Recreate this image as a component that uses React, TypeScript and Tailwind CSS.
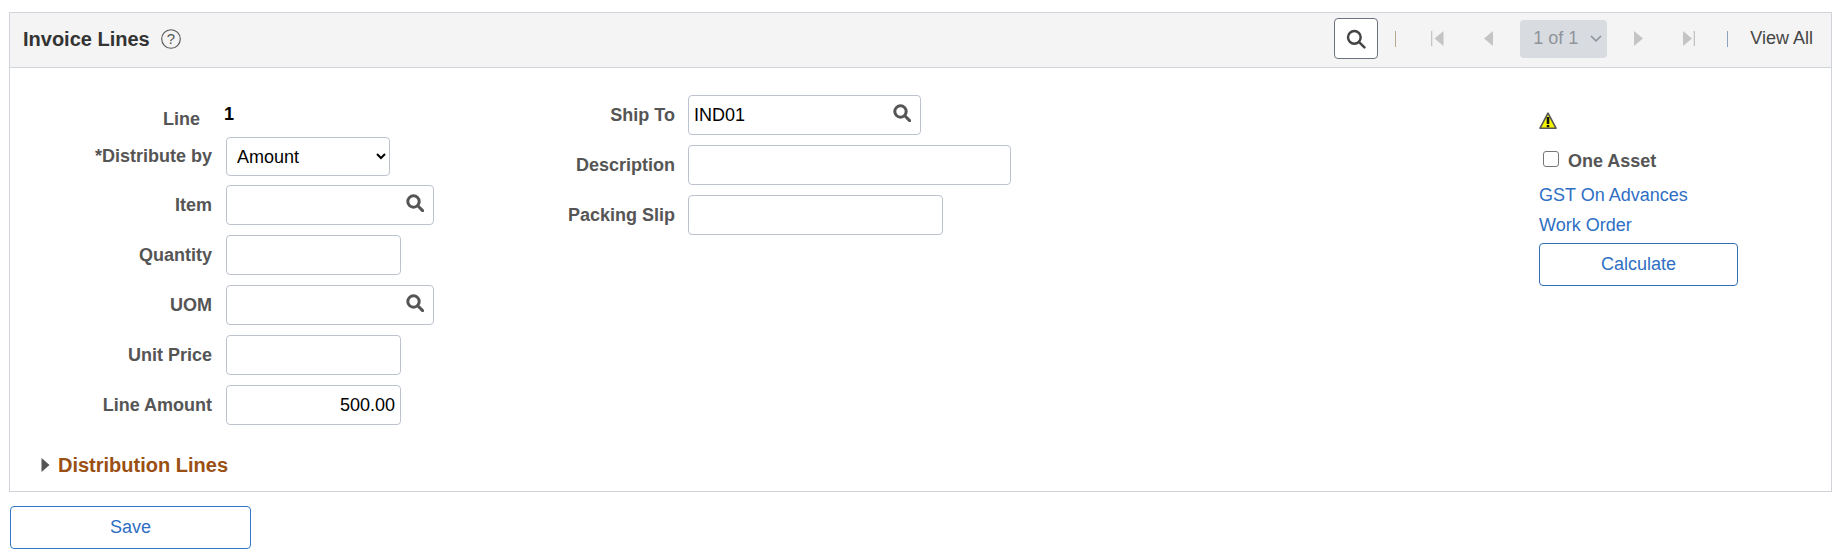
import React from "react";

const Lens = ({ size = 18, sw = 3, color = "#555" }: { size?: number; sw?: number; color?: string }) => (
  <svg width={size} height={size} viewBox="0 0 18 18" fill="none" stroke={color} strokeWidth={sw} className="block">
    <circle cx="7.5" cy="7.5" r="5.7" />
    <path d="M11.8 11.8 L16.6 16.6" strokeLinecap="round" />
  </svg>
);

const inputCls =
  "h-full w-full rounded-[4px] border border-[#bcc3cf] bg-white px-[5px] text-[18px] text-black outline-none";

const Row = ({ label, labelW, gap, children }: { label: string; labelW: string; gap: string; children: React.ReactNode }) => (
  <div className={`flex h-10 items-center ${gap}`}>
    <label className={`${labelW} shrink-0 text-right text-[18px] font-bold text-[#555]`}>{label}</label>
    {children}
  </div>
);

const Prompt = ({ w, value }: { w: string; value?: string }) => (
  <div className={`relative h-10 ${w}`}>
    <input readOnly value={value ?? ""} className={`${inputCls} pr-8`} />
    <span className="absolute right-[10px] top-[9px]">
      <Lens />
    </span>
  </div>
);

const Plain = ({ w, value, right }: { w: string; value?: string; right?: boolean }) => (
  <div className={`h-10 ${w}`}>
    <input readOnly value={value ?? ""} className={`${inputCls} ${right ? "text-right" : ""}`} />
  </div>
);

const Sep = ({ color }: { color: string }) => <span className={`block h-[16px] w-px ${color}`} />;

export default function App() {
  return (
    <div className="min-h-[556px] bg-white pl-[9px] pt-[12px] font-['Liberation_Sans',Arial,sans-serif]">
      <section className="w-[1823px] border border-[#d0d3d9]">
        <header className="flex h-[55px] items-center justify-between border-b border-[#d0d3d9] bg-[#f4f4f4] pb-[3px] pl-[13px] pr-[18px]">
          <div className="flex items-center gap-[11px]">
            <h2 className="text-[20px] font-bold text-[#333]">Invoice Lines</h2>
            <svg width="20" height="20" viewBox="0 0 20 20" fill="none" className="block">
              <circle cx="10" cy="10" r="9.3" stroke="#555" strokeWidth="1.1" />
              <text x="10" y="15" textAnchor="middle" fontSize="15" fill="#555" fontFamily="Liberation Sans">?</text>
            </svg>
          </div>
          <div className="flex items-center">
            <button className="flex h-[41px] w-[44px] items-center justify-center rounded-[4px] border border-[#6b7280] bg-white">
              <Lens size={20} sw={2.2} color="#444" />
            </button>
            <span className="ml-[17px]"><Sep color="bg-[#b9a98e]" /></span>
            <svg width="13" height="17" viewBox="0 0 13 17" className="ml-[35px] block" fill="#c4c4c4">
              <rect x="0" y="1" width="1.3" height="15" />
              <path d="M12.5 1 V16 L3.5 8.5 Z" />
            </svg>
            <svg width="9" height="17" viewBox="0 0 9 17" className="ml-[40px] block" fill="#c4c4c4">
              <path d="M9 1 V16 L0 8.5 Z" />
            </svg>
            <div className="ml-[27px] flex h-[38px] w-[87px] items-center gap-[12px] rounded-[4px] bg-[#d8dbe0] pl-[13px] text-[18px] text-[#8f949b]">
              <span>1 of 1</span>
              <svg width="12" height="7" viewBox="0 0 12 7" fill="none" stroke="#8f949b" strokeWidth="1.6" className="block">
                <path d="M1 1 L6 5.8 L11 1" />
              </svg>
            </div>
            <svg width="9" height="17" viewBox="0 0 9 17" className="ml-[27px] block" fill="#c4c4c4">
              <path d="M0 1 V16 L9 8.5 Z" />
            </svg>
            <svg width="12" height="17" viewBox="0 0 12 17" className="ml-[40px] block" fill="#c4c4c4">
              <path d="M0 1 V16 L9 8.5 Z" />
              <rect x="10.7" y="1" width="1.3" height="15" />
            </svg>
            <span className="ml-[32px]"><Sep color="bg-[#8da2bd]" /></span>
            <a className="ml-[22px] text-[18px] text-[#444]">View All</a>
          </div>
        </header>

        <div className="flex h-[423px] flex-col">
          <div className="flex h-[375px] items-start">
            <div className="flex w-[440px] shrink-0 flex-col pt-[27px]">
              <div className="flex h-[42px] items-start">
                <span className="w-[190px] shrink-0 pt-[11px] text-right text-[18px] font-bold text-[#555]">Line</span>
                <span className="ml-[24px] pt-[6px] text-[18px] font-bold text-black">1</span>
              </div>
              <div className="flex h-[39px] items-center gap-[14px]">
                <label className="w-[202px] shrink-0 text-right text-[18px] font-bold text-[#555]">*Distribute by</label>
                <select className="h-[39px] w-[164px] rounded-[4px] border border-[#bcc3cf] bg-white pl-[6px] text-[18px] text-black outline-none">
                  <option>Amount</option>
                </select>
              </div>
              <div className="mt-[9px] flex flex-col gap-[10px]">
                <Row label="Item" labelW="w-[202px]" gap="gap-[14px]"><Prompt w="w-[208px]" /></Row>
                <Row label="Quantity" labelW="w-[202px]" gap="gap-[14px]"><Plain w="w-[175px]" /></Row>
                <Row label="UOM" labelW="w-[202px]" gap="gap-[14px]"><Prompt w="w-[208px]" /></Row>
                <Row label="Unit Price" labelW="w-[202px]" gap="gap-[14px]"><Plain w="w-[175px]" /></Row>
                <Row label="Line Amount" labelW="w-[202px]" gap="gap-[14px]"><Plain w="w-[175px]" value="500.00" right /></Row>
              </div>
            </div>
            <div className="flex w-[561px] shrink-0 flex-col gap-[10px] pt-[27px]">
              <Row label="Ship To" labelW="w-[225px]" gap="gap-[13px]"><Prompt w="w-[233px]" value="IND01" /></Row>
              <Row label="Description" labelW="w-[225px]" gap="gap-[13px]"><Plain w="w-[323px]" /></Row>
              <Row label="Packing Slip" labelW="w-[225px]" gap="gap-[13px]"><Plain w="w-[255px]" /></Row>
            </div>
            <div className="ml-[528px] flex w-[199px] shrink-0 flex-col pt-[44px]">
              <svg width="18" height="18" viewBox="0 0 18 18" className="block">
                <path d="M9 1.2 L17 16.2 H1 Z" fill="#f5f500" stroke="#555" strokeWidth="1.6" strokeLinejoin="round" />
                <rect x="7.7" y="5" width="2.6" height="7" fill="#111" />
                <rect x="7.7" y="13" width="2.6" height="2.2" fill="#111" />
              </svg>
              <div className="mt-[21px] flex h-[16px] items-center pl-[4px]">
                <input type="checkbox" readOnly className="m-0 h-[16px] w-[16px] appearance-none rounded-[3px] border border-[#767676] bg-white" />
                <span className="relative top-[2px] ml-[9px] text-[18px] font-bold text-[#555]">One Asset</span>
              </div>
              <a className="mt-[18px] h-[20px] text-[18px] leading-[20px] text-[#2e6fc4]">GST On Advances</a>
              <a className="mt-[10px] h-[20px] text-[18px] leading-[20px] text-[#2e6fc4]">Work Order</a>
              <button className="mt-[8px] h-[43px] w-[199px] rounded-[4px] border border-[#2e6fb5] bg-white text-[18px] text-[#2e6fc4]">Calculate</button>
            </div>
          </div>
          <div className="flex items-center pl-[31px] pt-[7px]">
            <svg width="9" height="16" viewBox="0 0 9 16" className="block" fill="#555">
              <path d="M0.5 1 V15 L8.5 8 Z" />
            </svg>
            <span className="ml-[8px] text-[20px] font-bold text-[#9a4f13]">Distribution Lines</span>
          </div>
        </div>
      </section>
      <button className="ml-px mt-[14px] h-[43px] w-[241px] rounded-[4px] border border-[#2e78c8] bg-white text-[18px] text-[#2e6fc4]">Save</button>
    </div>
  );
}
